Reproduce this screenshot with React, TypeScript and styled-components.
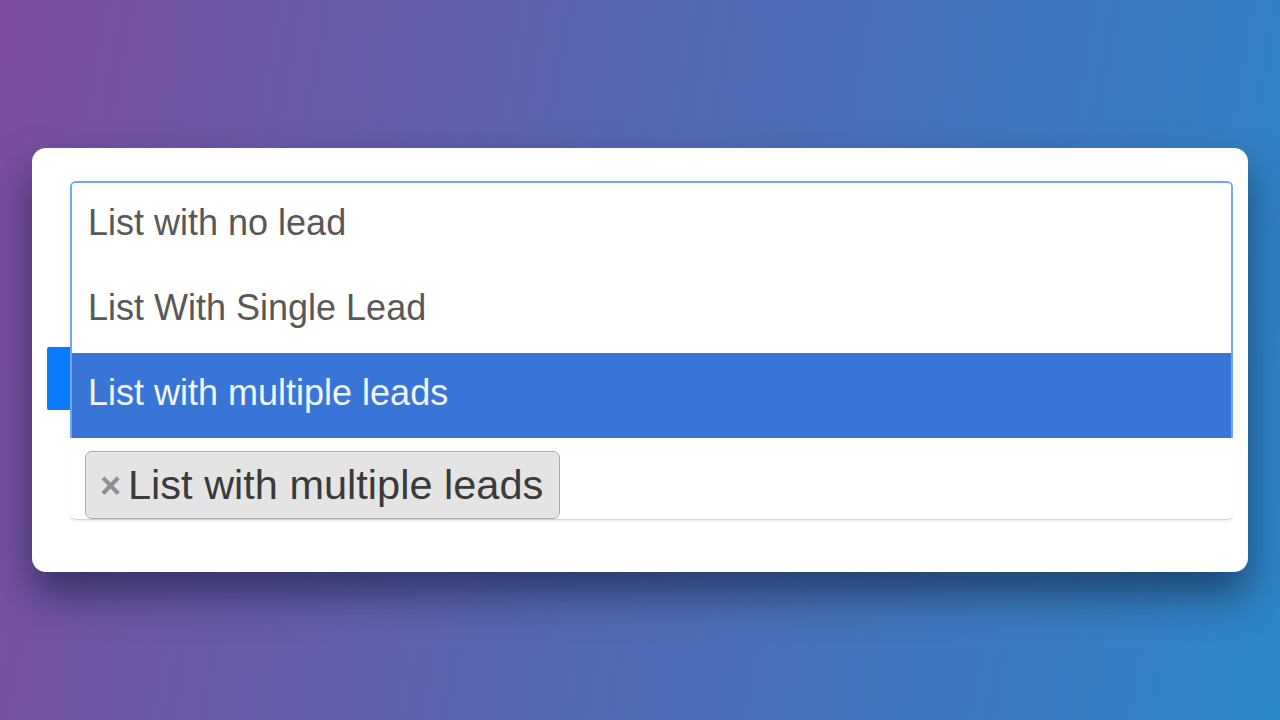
import styled, { createGlobalStyle } from "styled-components";

const OPTIONS = [
  "List with no lead",
  "List With Single Lead",
  "List with multiple leads",
];
const SELECTED = 2;

const GlobalStyle = createGlobalStyle`
  html, body {
    margin: 0;
    padding: 0;
  }
  body {
    font-family: "Liberation Sans", Arial, sans-serif;
  }
`;

const Page = styled.div`
  width: 1280px;
  height: 720px;
  box-sizing: border-box;
  padding: 148px 32px 0 32px;
  background: linear-gradient(100deg, #7b4d9f 0%, #5866b2 45%, #2c87c7 100%);
  overflow: hidden;
`;

const Card = styled.div`
  height: 424px;
  box-sizing: border-box;
  padding: 33px 15px 0 38px;
  background: #fff;
  border-radius: 14px;
  box-shadow: 0 22px 40px rgba(10, 20, 50, 0.55);
`;

const Field = styled.div`
  position: relative;
`;

const Marker = styled.div`
  position: absolute;
  left: -23px;
  top: 166px;
  width: 23px;
  height: 63px;
  background: #0a7bff;
  border-radius: 2px 0 0 2px;
`;

const Drop = styled.ul`
  list-style: none;
  margin: 0;
  padding: 0;
  border: 2px solid #74a4f4;
  border-bottom: none;
  border-radius: 6px 6px 0 0;
  overflow: hidden;
`;

const Option = styled.li<{ $active?: boolean }>`
  height: 85px;
  line-height: 80px;
  font-size: 36px;
  color: ${(p) => (p.$active ? "#f2f5fb" : "#585858")};
  background: ${(p) => (p.$active ? "#3875d7" : "#fff")};
  margin: ${(p) => (p.$active ? "0 -2px" : "0")};
  padding: ${(p) => (p.$active ? "0 18px" : "0 16px")};
`;

const Choices = styled.div`
  height: 82px;
  box-sizing: border-box;
  padding: 13px 15px 0;
  background: #fff;
  border-bottom: 1px solid #d4d4d4;
  border-radius: 0 0 6px 6px;
  box-shadow: 0 2px 2px rgba(0, 0, 0, 0.06);
`;

const Tag = styled.span`
  display: inline-flex;
  align-items: center;
  height: 68px;
  box-sizing: border-box;
  padding: 0 16px 0 14px;
  gap: 7px;
  background: #e4e4e4;
  border: 1.5px solid #a8a8a8;
  border-radius: 7px;
  color: #3a3a3a;
  font-size: 41.5px;
  box-shadow: inset 0 0 2px #fff;
`;

const Close = styled.span`
  font-size: 36px;
  color: #8f8f8f;
  font-weight: 700;
  line-height: 1;
  margin-top: 1px;
`;

const App = () => {
  return (
    <>
      <GlobalStyle />
      <Page>
        <Card>
          <Field>
            <Marker />
            <Drop>
              {OPTIONS.map((o, i) => (
                <Option key={o} $active={i === SELECTED}>
                  {o}
                </Option>
              ))}
            </Drop>
            <Choices>
              <Tag>
                <Close>×</Close>
                {OPTIONS[SELECTED]}
              </Tag>
            </Choices>
          </Field>
        </Card>
      </Page>
    </>
  );
};

export default App;
